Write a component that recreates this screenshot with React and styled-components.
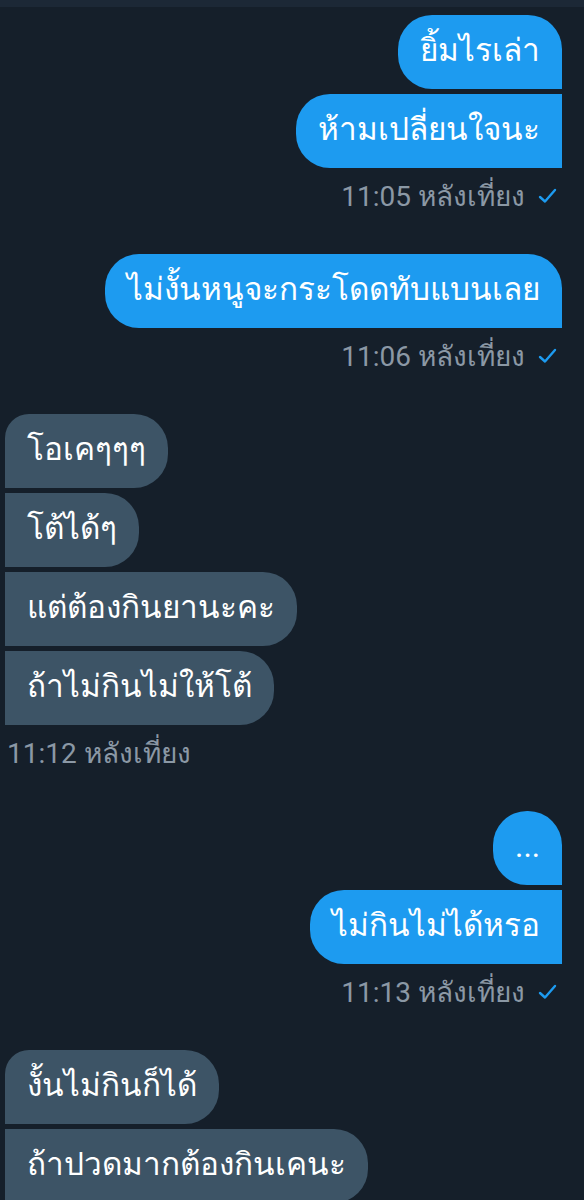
import React from "react";
import styled, { createGlobalStyle } from "styled-components";

const GlobalStyle = createGlobalStyle`
  html, body {
    margin: 0;
    padding: 0;
    background: #151f2a;
  }
  body {
    font-family: Roboto, "Noto Sans", sans-serif;
    -webkit-font-smoothing: antialiased;
  }
`;

const R = 34;

const Screen = styled.div`
  width: 584px;
  height: 1200px;
  overflow: hidden;
  background: #151f2a;
  display: flex;
  flex-direction: column;
`;

const TopBar = styled.div`
  height: 7px;
  background: #1c2836;
  flex-shrink: 0;
`;

const Thread = styled.div`
  display: flex;
  flex-direction: column;
  padding: 8px 22px 0 5px;
`;

const Group = styled.div`
  display: flex;
  flex-direction: column;
  align-items: ${(p) => (p.$sent ? "flex-end" : "flex-start")};
  gap: 5px;
  margin-bottom: 40px;
`;

const Bubble = styled.div`
  box-sizing: border-box;
  height: 74px;
  padding: 16px 22px 18px 22px;
  font-size: 31.5px;
  line-height: 40px;
  color: #ffffff;
  white-space: nowrap;
  background: ${(p) => (p.$sent ? "#1d9bf0" : "#3d5466")};
  border-radius: ${(p) => p.$radius};
`;

const Stamp = styled.div`
  display: flex;
  align-items: center;
  gap: 13px;
  height: 36px;
  margin-top: 5px;
  padding: ${(p) => (p.$sent ? "0 5px 0 0" : "0 0 0 2px")};
  font-size: 28px;
  color: #8b98a5;
  white-space: nowrap;
`;

const Check = () => (
  <svg width="19" height="16" viewBox="0 0 19 16">
    <path d="M2 9 L7 13.5 L17 2" fill="none" stroke="#1d9bf0" strokeWidth="2.4" strokeLinecap="round" strokeLinejoin="round" />
  </svg>
);

const groups = [
  { sent: true, texts: ["ยิ้มไรเล่า", "ห้ามเปลี่ยนใจนะ"], time: "11:05 หลังเที่ยง" },
  { sent: true, texts: ["ไม่งั้นหนูจะกระโดดทับแบนเลย"], time: "11:06 หลังเที่ยง" },
  { sent: false, texts: ["โอเคๆๆๆ", "โต้ได้ๆ", "แต่ต้องกินยานะคะ", "ถ้าไม่กินไม่ให้โต้"], time: "11:12 หลังเที่ยง" },
  { sent: true, texts: ["...", "ไม่กินไม่ได้หรอ"], time: "11:13 หลังเที่ยง" },
  { sent: false, texts: ["งั้นไม่กินก็ได้", "ถ้าปวดมากต้องกินเคนะ"], time: null },
];

// tl tr br bl, like twitter's grouped bubbles
const radiusFor = (sent, i) => {
  if (sent) return `${R}px ${i === 0 ? R : 0}px 0 ${R}px`;
  return `${i === 0 ? 24 : 0}px ${R}px ${R}px 0`;
};

const App = () => (
  <>
    <GlobalStyle />
    <Screen>
      <TopBar />
      <Thread>
        {groups.map((g, gi) => (
          <Group key={gi} $sent={g.sent}>
            {g.texts.map((t, i) => (
              <Bubble key={i} $sent={g.sent} $radius={radiusFor(g.sent, i)}>
                {t}
              </Bubble>
            ))}
            {g.time && (
              <Stamp $sent={g.sent}>
                <span>{g.time}</span>
                {g.sent && <Check />}
              </Stamp>
            )}
          </Group>
        ))}
      </Thread>
    </Screen>
  </>
);

export default App;
